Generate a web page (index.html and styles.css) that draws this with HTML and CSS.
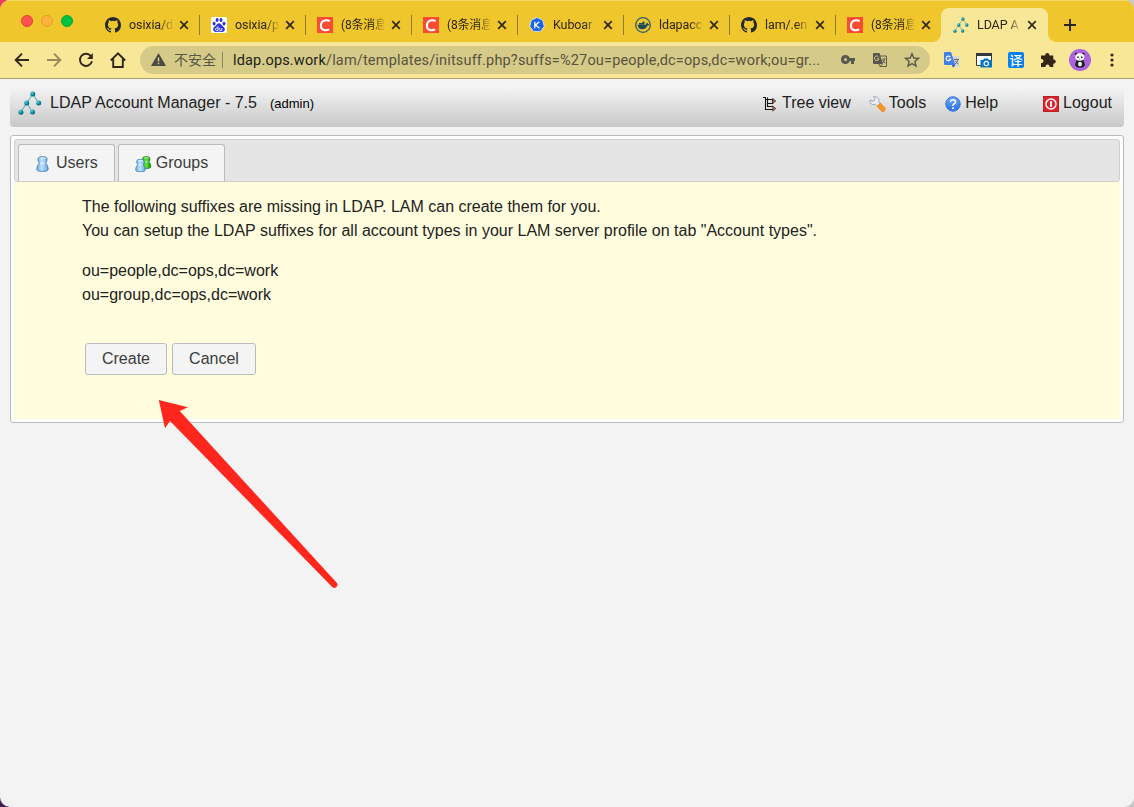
FILE: index.html
```html
<!DOCTYPE html>
<html lang="en">
<head>
<meta charset="utf-8">
<title>LDAP Account Manager</title>
<link rel="stylesheet" href="styles.css">
</head>
<body>
<svg class="defs" aria-hidden="true">
  <defs>
    <radialGradient id="ball" cx=".35" cy=".3" r=".8"><stop offset="0" stop-color="#55d3dc"/><stop offset=".55" stop-color="#0b8a9c"/><stop offset="1" stop-color="#07505e"/></radialGradient>
    <linearGradient id="blue" x2="1"><stop offset="0" stop-color="#6aaeea"/><stop offset=".45" stop-color="#c4e3ff"/><stop offset="1" stop-color="#62a4e2"/></linearGradient>
    <linearGradient id="green" x2="1"><stop offset="0" stop-color="#159c12"/><stop offset=".5" stop-color="#5ee83c"/><stop offset="1" stop-color="#10880e"/></linearGradient>
    <linearGradient id="help" y2="1" x2="0"><stop offset="0" stop-color="#6da5fb"/><stop offset="1" stop-color="#2a72ea"/></linearGradient>
  </defs>
  <symbol id="github" viewBox="0 0 16 16"><path d="M8 0C3.58 0 0 3.58 0 8c0 3.54 2.29 6.53 5.47 7.59.4.07.55-.17.55-.38v-1.49c-2.01.37-2.53-.49-2.69-.94-.09-.23-.48-.94-.82-1.13-.28-.15-.68-.52-.01-.53.63-.01 1.08.58 1.23.82.72 1.21 1.87.87 2.33.66.07-.52.28-.87.51-1.07-1.78-.2-3.64-.89-3.64-3.95 0-.87.31-1.59.82-2.15-.08-.2-.36-1.02.08-2.12 0 0 .67-.21 2.2.82a7.6 7.6 0 0 1 4 0c1.53-1.04 2.2-.82 2.2-.82.44 1.1.16 1.92.08 2.12.51.56.82 1.27.82 2.15 0 3.07-1.87 3.75-3.65 3.95.29.25.54.73.54 1.48v2.2c0 .21.15.46.55.38A8 8 0 0 0 16 8c0-4.42-3.58-8-8-8z" fill="#24292e"/></symbol>
  <symbol id="baidu" viewBox="0 0 16 16"><rect width="16" height="16" rx="1.5" fill="#fff"/><g fill="#2932e1"><ellipse cx="3.100" cy="6.600" rx="1.500" ry="1.900"/><ellipse cx="6.100" cy="3.100" rx="1.500" ry="2"/><ellipse cx="10" cy="3.100" rx="1.500" ry="2"/><ellipse cx="13" cy="6.600" rx="1.500" ry="1.900"/><path d="M8 6.200c1.700 0 2.300 1.500 3.300 2.600s2.700 1.800 2.500 3.700c-.1 1.700-1.400 2.500-2.900 2.400-1-.1-1.900-.2-2.900-.2s-1.900.1-2.900.2c-1.500.1-2.800-.7-2.900-2.400-.2-1.900 1.500-2.600 2.500-3.700S6.300 6.200 8 6.200z"/></g><path d="M7 9.200v4.300H5.700a1.200 1.200 0 0 1 0-2.500H7M8.700 11v1.800q0 .7.700.7h1.400V11" fill="none" stroke="#fff" stroke-width=".9"/></symbol>
  <symbol id="csdn" viewBox="0 0 16 16"><rect width="16" height="16" fill="#fc4b33"/><path d="M12.700 4.100C10.400 2.900 4.300 2.400 3.900 8.500c-.3 5.300 5.400 5.300 8.300 3.800" fill="none" stroke="#fff" stroke-width="2"/></symbol>
  <symbol id="kuboard" viewBox="0 0 16 16"><path d="M8 .5l5.700 2.700 1.500 6.200-3.900 5H4.700l-3.900-5 1.500-6.200z" fill="#1662e8" stroke="#dcecff" stroke-width=".8"/><path d="M5.800 4.800v6.500M10.300 4.800L6.500 8l4 3.300" fill="none" stroke="#fff" stroke-width="1.300"/></symbol>
  <symbol id="docker" viewBox="0 0 16 16"><circle cx="8" cy="8" r="7.300" fill="none" stroke="#27606e" stroke-width="1.300"/><path d="M2.700 7.700h8.200q.6-1.700 1.100-2.100 1 .5 1 1.500.8-.1 1.500.3-.4 1-1.900 1.200-1.400 3.700-5.300 3.700-4.300 0-4.600-4.600zM4 6h5.700v1.400H4zM7.500 4.400h1.800V6H7.500z" fill="#214b5d"/></symbol>
  <symbol id="ldap" viewBox="0 0 24 24"><path d="M14.800 3.200L8.700 12 2.800 21.200M8.700 12l5.800 9M14.800 3.200l5.900 8.900" fill="none" stroke="#36a8b5" stroke-width=".9"/><g fill="url(#ball)"><circle cx="14.800" cy="3" r="2.500"/><circle cx="8.700" cy="12" r="2.500"/><circle cx="20.700" cy="12" r="2.500"/><circle cx="2.900" cy="21.200" r="2.500"/><circle cx="14.500" cy="21" r="2.500"/></g></symbol>
  <symbol id="close" viewBox="0 0 10 10"><path d="M1.200 1.200l7.600 7.600m0-7.600L1.200 8.800" stroke="#332918" stroke-width="1.700"/></symbol>
  <symbol id="pawn" viewBox="0 0 13 16"><path d="M2 3Q2 .7 6.500.7T11 3Q11 5.600 9.700 7.200q2.500 2 2.500 6.500Q12 15.400 6.500 15.400T.8 13.700q0-4.500 2.500-6.500Q2 5.600 2 3z" stroke-width="1"/><path d="M3.500 2.500q3-1.200 6 0M3.800 7.200h5.400" stroke="#fff" stroke-opacity=".7" fill="none"/></symbol>
</svg>

<header class="tabstrip">
  <div class="lights"><i class="red"></i><i class="amber"></i><i class="green"></i></div>
  <div class="tab"><svg class="fav"><use href="#github"/></svg><span class="title">osixia/d</span><svg class="x"><use href="#close"/></svg></div>
  <div class="tab"><svg class="fav"><use href="#baidu"/></svg><span class="title">osixia/p</span><svg class="x"><use href="#close"/></svg></div>
  <div class="tab"><svg class="fav"><use href="#csdn"/></svg><span class="title cjk">(8条消息</span><svg class="x"><use href="#close"/></svg></div>
  <div class="tab"><svg class="fav"><use href="#csdn"/></svg><span class="title cjk">(8条消息</span><svg class="x"><use href="#close"/></svg></div>
  <div class="tab"><svg class="fav"><use href="#kuboard"/></svg><span class="title">Kuboar</span><svg class="x"><use href="#close"/></svg></div>
  <div class="tab"><svg class="fav"><use href="#docker"/></svg><span class="title">ldapacc</span><svg class="x"><use href="#close"/></svg></div>
  <div class="tab"><svg class="fav"><use href="#github"/></svg><span class="title">lam/.en</span><svg class="x"><use href="#close"/></svg></div>
  <div class="tab last"><svg class="fav"><use href="#csdn"/></svg><span class="title cjk">(8条消息</span><svg class="x"><use href="#close"/></svg></div>
  <div class="tab active"><svg class="fav"><use href="#ldap"/></svg><span class="title">LDAP A</span><svg class="x"><use href="#close"/></svg></div>
  <svg class="plus" viewBox="0 0 12 12"><path d="M6 0v12M0 6h12" stroke="#2c2414" stroke-width="1.900"/></svg>
</header>

<nav class="toolbar">
  <div class="navicons">
    <svg viewBox="0 0 16 16" class="stroke"><path d="M15 8H2M8 1.700L1.700 8 8 14.300"/></svg>
    <svg viewBox="0 0 16 16" class="stroke dim"><path d="M1 8h13M8 1.700L14.300 8 8 14.300"/></svg>
    <svg viewBox="0 0 16 16" class="stroke"><path d="M13.200 4.500A6.100 6.100 0 1 0 14 9.300"/><path d="M14.800 1v6H9z" fill="#33261a" stroke="none"/></svg>
    <svg viewBox="0 0 16 16" class="stroke"><path d="M.8 8.500L8 1.400l7.200 7.100M3.200 7v8h9.600V7"/></svg>
  </div>
  <div class="omnibox">
    <svg class="warn" viewBox="0 0 15 13"><path d="M7.500 0L15 13H0z" fill="#4a4a43"/><path d="M7.500 4.500v4M7.500 9.800v1.500" stroke="#d8ca89" stroke-width="1.500"/></svg>
    <span class="insecure">不安全</span><i class="bar"></i>
    <span class="url"><b>ldap.ops.work</b>/lam/templates/initsuff.php?suffs=%27ou=people,dc=ops,dc=work;ou=gr...</span>
    <svg class="key" viewBox="0 0 14 9"><path d="M4.500 0a4.500 4.500 0 1 0 4.200 6H10v3h3V6h1V3H8.700A4.500 4.500 0 0 0 4.500 0zm0 3a1.500 1.500 0 1 1 0 3 1.500 1.500 0 0 1 0-3z" fill="#57584f" fill-rule="evenodd"/></svg>
    <svg class="trans" viewBox="0 0 16 16"><path d="M6 4h8.500v10.500H8L6 11z" fill="none" stroke="#5d5d52"/><path d="M1 1h6.500l3.500 11H2q-1 0-1-1V2q0-1 1-1z" fill="#57584f"/><path d="M6.500 4.800A2.300 2.300 0 1 0 7 6.800H5" fill="none" stroke="#d8ca89"/><path d="M10.500 7h3m-1 0q-.3 2.600-2 4m0-3q1.500 2.500 3 3M8.500 14l2-2" fill="none" stroke="#57584f"/></svg>
    <svg class="star" viewBox="0 0 16 16"><path d="M8 1.700l1.800 4.300 4.700.4-3.600 3.100 1.100 4.600-4-2.500-4 2.500 1.100-4.600-3.600-3.100 4.700-.4z" fill="none" stroke="#57584f" stroke-width="1.400"/></svg>
  </div>
  <div class="extensions">
    <svg viewBox="0 0 16 16"><path d="M7 4h8.500v11.500H9z" fill="#d9d9d0"/><path d="M1 0h6l4.300 13H1q-1 0-1-1V1q0-1 1-1z" fill="#3f80ee"/><path d="M8 13h3.300L9 15.800z" fill="#2455bd"/><path d="M6.300 5A2.300 2.300 0 1 0 6.700 7H4.700" fill="none" stroke="#fff" stroke-width="1.200"/><path d="M10 7.500h5M12.500 6.500v1m1.500 0q-.8 3.500-3 4.500m0-3.500q1.500 2.700 3.500 3.500" fill="none" stroke="#60717d"/></svg>
    <svg viewBox="0 0 16 16"><path d="M.5 1.500h15v12H.5z" fill="#fff" stroke="#33393a"/><path d="M0 1h16v3H0z" fill="#33393a"/><path d="M4.500 8H7l1-1.500h4L13 8h3v7.500H4.500z" fill="#0874c9"/><circle cx="10.300" cy="11.600" r="2.200" fill="none" stroke="#fff" stroke-width="1.100"/></svg>
    <span class="yi">译</span>
    <svg viewBox="0 0 16 16"><path d="M1 3.500h4.200V3a2.100 2.100 0 0 1 4.200 0v.5h3.900v4h.4a2.100 2.100 0 0 1 0 4.200h-.4V15H9.500v-.6a2 2 0 0 0-4 0v.6H1v-4h.5a2 2 0 0 0 0-4H1z" fill="#352517"/></svg>
    <svg class="avatar" viewBox="0 0 22 22"><circle cx="11" cy="11" r="11" fill="#ad62df"/><path d="M7.500 11h7l1.500 5-2 2.500H8L6 16z" fill="#222"/><ellipse cx="11" cy="15" rx="2" ry="2.300" fill="#eee"/><g fill="#222"><circle cx="7.200" cy="5" r="1.300"/><circle cx="14.300" cy="5" r="1.300"/></g><ellipse cx="10.800" cy="8" rx="4.500" ry="3.700" fill="#fff"/><g fill="#222"><ellipse cx="9" cy="8.200" rx=".8" ry="1"/><ellipse cx="12.700" cy="8.200" rx=".8" ry="1"/><circle cx="10.800" cy="9.900" r=".5"/></g></svg>
    <svg class="more" viewBox="0 0 4 14"><g fill="#33261a"><circle cx="2" cy="2" r="1.600"/><circle cx="2" cy="7" r="1.600"/><circle cx="2" cy="12" r="1.600"/></g></svg>
  </div>
</nav>

<main class="page">
  <div class="appbar">
    <svg class="logo"><use href="#ldap"/></svg>
    <span class="name">LDAP Account Manager - 7.5</span><span class="user">(admin)</span>
    <div class="menu">
      <a class="tree"><svg viewBox="0 0 14 16"><path d="M0 1.500h2.500M2.500 1v12.500H10M2.500 3.500H11M4.500 1.500v9H10M4.500 7.500h5v-4" fill="none" stroke="#171513" stroke-width="1.100"/><path d="M9.700 2.300L12.900 5l-3.200 2.700zM9.700 10l3.200 2.500-3.200 2.700z" fill="#97705a" stroke="#3b261c" stroke-width=".6"/></svg>Tree view</a>
      <a class="tools"><svg viewBox="0 0 17 16"><path d="M1.300 3.900l2.900 1.300 1.700-1.200-.1-1.700L4.500.7q3.700-.7 5.200 1.800.9 1.900.1 3.500l1.700 1.800-2.800 2.700L6.500 8.300Q3.300 9.500 1.500 7.300.6 5.700 1.300 3.900z" fill="#e9edf4" stroke="#98a1b3" stroke-width=".9"/><path d="M8.200 10.100l3.200-3 4.500 4.800q.8 1.600-.3 2.800t-2.900.6z" fill="#fa971f" stroke="#e07a1c" stroke-width=".8"/></svg>Tools</a>
      <a class="help"><svg viewBox="0 0 16 16"><circle cx="8" cy="8" r="7.200" fill="url(#help)" stroke="#2c6dd8"/><path d="M5.500 6.200Q5.600 3.700 8 3.700T10.500 6Q10.400 7.300 9 8T8 10" fill="none" stroke="#fff" stroke-width="1.600"/><circle cx="8" cy="12.200" r="1" fill="#fff"/></svg>Help</a>
      <a class="logout"><svg viewBox="0 0 16 16"><rect x=".5" y=".5" width="15" height="15" fill="#df2530" stroke="#b8202a"/><circle cx="8" cy="8" r="5" fill="none" stroke="#fff" stroke-width="1.500"/><path d="M8 5v6" stroke="#fff" stroke-width="1.800"/></svg>Logout</a>
    </div>
  </div>

  <section class="panel">
    <div class="typetabs">
      <div class="typetab"><svg class="pawn one"><use href="#pawn" fill="url(#blue)" stroke="#4b86bd"/></svg>Users</div>
      <div class="typetab groups"><svg class="pair" viewBox="0 0 17 17"><use href="#pawn" x="6" y="0" width="10.500" height="13" fill="url(#green)" stroke="#15840f"/><use href="#pawn" x="0" y="2.500" width="11" height="14" fill="url(#blue)" stroke="#4b86bd"/></svg>Groups</div>
    </div>
    <div class="content">
      <p>The following suffixes are missing in LDAP. LAM can create them for you.<br>You can setup the LDAP suffixes for all account types in your LAM server profile on tab "Account types".</p>
      <p>ou=people,dc=ops,dc=work<br>ou=group,dc=ops,dc=work</p>
      <div class="buttons"><button>Create</button><button class="cancel">Cancel</button></div>
    </div>
  </section>
</main>
<svg class="arrow" viewBox="0 0 180 190"><path d="M.8 1L30 8.300l-8.300 3.700L178.500 183.500a3 3 0 0 1-4.500 4.300L12 22l-5 7.300z" fill="#ff261e"/></svg>
</body>
</html>
```
FILE: styles.css
```css
* { box-sizing: border-box; }
html { background: linear-gradient(90deg, #402050 50%, #c8c8c8 50%); height: 100%; }
html::before { content: ""; position: absolute; width: 12px; height: 12px; background: #ef3c5c; }
body {
  position: relative;
  display: flex;
  flex-direction: column;
  margin: 0;
  height: 807px;
  overflow: hidden;
  border-radius: 10px;
  background: #f3f3f3;
  color: #222;
  font-family: "Liberation Sans", Arial, sans-serif;
  font-size: 16px;
}
.defs { position: absolute; width: 0; height: 0; }
svg { display: block; flex: none; }

.tabstrip {
  display: flex;
  align-items: flex-end;
  height: 42px;
  background: #f0c62d;
  border-top: 1px solid #f3d663;
  font: 12.5px Roboto, "Noto Sans CJK SC", sans-serif;
  color: #2d250f;
}
.lights { display: flex; gap: 8px; width: 93px; height: 27px; padding-left: 21px; }
.lights i { width: 12px; height: 12px; border-radius: 50%; border: 1px solid; }
.lights .red { background: #ff544d; border-color: #e43e32; }
.lights .amber { background: #ffb33d; border-color: #e59b27; }
.lights .green { background: #00c441; border-color: #08a52f; }
.tab { position: relative; display: flex; align-items: center; width: 106px; height: 34px; padding-left: 12px; }
.tab::after { content: ""; position: absolute; right: -1px; top: 7px; width: 1px; height: 20px; background: #927a25; }
.tab.last::after { display: none; }
.fav { width: 16px; height: 16px; }
.title {
  width: 43px;
  margin: 0 8px;
  white-space: nowrap;
  line-height: 18px;
  letter-spacing: -.1px;
  -webkit-mask-image: linear-gradient(90deg, #000 72%, transparent 105%);
  mask-image: linear-gradient(90deg, #000 72%, transparent 105%);
}
.title.cjk { font-size: 12px; letter-spacing: -.2px; }
.x { width: 10px; height: 10px; margin-left: -1px; }
.tab.active { width: 107px; background: #f8e797; border-radius: 8px 8px 0 0; }
.tab.active::before, .tab.active::after {
  content: ""; position: absolute; top: auto; bottom: 0; width: 8px; height: 8px;
}
.tab.active::before { left: -8px; background: radial-gradient(circle at 0 0, transparent 7.5px, #f8e797 8px); }
.tab.active::after { right: -8px; background: radial-gradient(circle at 100% 0, transparent 7.5px, #f8e797 8px); }
.plus { width: 12px; height: 12px; margin: 0 0 11px 16px; }

.toolbar { display: flex; align-items: center; height: 37px; padding-bottom: 1px; background: #f8e797; border-bottom: 1px solid #aaa06b; }
.navicons { display: flex; gap: 16px; width: 140px; padding-left: 14px; }
.navicons svg { width: 16px; height: 16px; }
.stroke { fill: none; stroke: #33261a; stroke-width: 1.900; }
.dim { opacity: .48; }
.omnibox { display: flex; align-items: center; width: 790px; height: 28px; padding-left: 11px; border-radius: 14px; background: #d6ca89; font: 14.500px Roboto, "Noto Sans CJK SC", sans-serif; }
.warn { width: 15px; height: 13px; margin-right: 8px; }
.insecure { width: 42px; margin-top: -2px; font-size: 14px; color: #575647; white-space: nowrap; }
.bar { width: 1px; height: 16px; margin: 0 10px 0 6px; background: #8e8762; }
.url { width: 588px; padding-top: 1px; letter-spacing: .175px; color: #57533d; white-space: nowrap; }
.url b { font-weight: 400; color: #201e16; }
.key { width: 14px; height: 9px; margin-left: 20px; }
.trans { width: 16px; height: 16px; margin-left: 17px; }
.star { width: 16px; height: 16px; margin-left: 16px; }
.extensions { display: flex; align-items: center; gap: 16px; margin-left: 14px; }
.extensions svg { width: 16px; height: 16px; }
.yi { width: 16px; height: 16px; border-radius: 2px; background: #087ff5; color: #fff; font: 500 13px/16px "Noto Sans CJK SC", sans-serif; text-align: center; }
.extensions .avatar { width: 22px; height: 22px; margin: 0 -3px; }
.extensions .more { width: 4px; height: 14px; margin-left: 6px; }

.page { padding: 4px 10px 0; }
.appbar { display: flex; align-items: center; height: 44px; padding: 0 12px 4px 8px; background: linear-gradient(#f3f3f3 10%, #c8c8c8); border-radius: 0 0 4px 4px; }
.logo { width: 24px; height: 24px; margin: 0 8px 0 0; }
.user { margin: 1px 0 0 13px; font-size: 13px; color: #000; }
.menu { display: flex; margin-left: auto; }
.menu a { display: flex; align-items: center; }
.menu svg { width: 16px; height: 16px; margin: 2px 4px 0 0; }
.menu .tree svg { width: 14px; margin-right: 5px; }
.tools { margin-left: 18px; }
.menu .tools svg { width: 17px; margin-right: 3px; }
.help { margin-left: 19px; }
.logout { margin-left: 45px; }

.panel { height: 288px; margin-top: 8px; padding: 3px; border: 1px solid #bbb; border-radius: 3px; background: #fff; }
.typetabs { display: flex; gap: 3px; height: 43px; padding: 4px 3px 0; border: 1px solid #d0d0d0; border-radius: 3px; background: #e5e5e5; }
.typetab { display: flex; align-items: center; height: 37px; padding: 0 16px 0 17px; border: 1px solid #bbb; border-bottom: 0; border-radius: 3px 3px 0 0; background: #f4f4f4; color: #3c3c3c; }
.pawn.one { width: 13px; height: 16px; margin: 2px 7px 0 0; }
.pair { width: 17px; height: 17px; margin: 2px 4px 0 -1px; }
.content { height: 237px; padding: 13px 68px; background: #fffddd; line-height: 24px; }
.content p { margin: 0 0 16px; }
.buttons { display: flex; gap: 5px; padding: 20px 0 0 3px; }
.buttons button { width: 82px; height: 32px; padding: 0 0 1px; border: 1px solid #bbb; border-radius: 3px; background: #f4f4f4; color: #3c3c3c; font: inherit; line-height: 20px; }
.buttons .cancel { width: 84px; }
.arrow { position: absolute; left: 158px; top: 399px; width: 180px; height: 190px; }
```
